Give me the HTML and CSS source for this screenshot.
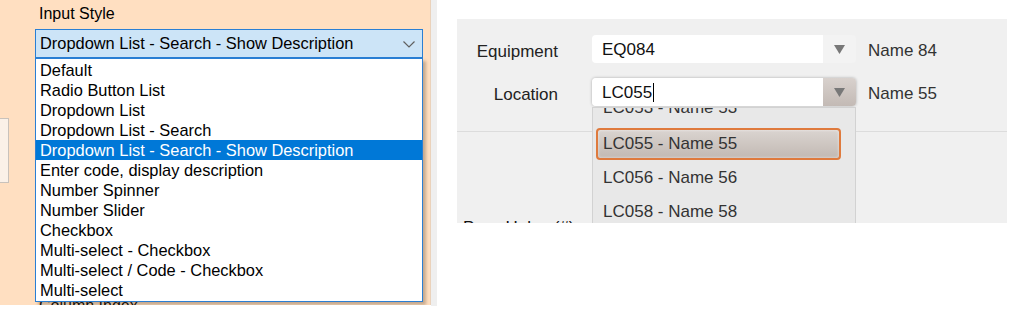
FILE: index.html
```html
<!DOCTYPE html>
<html lang="en">
<head>
<meta charset="UTF-8">
<meta name="viewport" content="width=device-width, initial-scale=1.0">
<title>Input Style</title>
<link rel="stylesheet" href="styles.css">
</head>
<body>
<div class="screen">

  <div class="props">
    <div class="props-edge"><div class="edge-box"></div></div>
    <div class="props-main">
      <div class="field-label">Input Style</div>
      <div class="combo">
        <div class="combo-box">
          <span>Dropdown List - Search - Show Description</span>
          <svg class="chevron" width="12" height="7" viewBox="0 0 12 7"><path d="M0.5 0.5 L6 6 L11.5 0.5" fill="none" stroke="#606060" stroke-width="1.2"/></svg>
        </div>
        <ul class="combo-list">
          <li>Default</li>
          <li>Radio Button List</li>
          <li>Dropdown List</li>
          <li>Dropdown List - Search</li>
          <li class="selected">Dropdown List - Search - Show Description</li>
          <li>Enter code, display description</li>
          <li>Number Spinner</li>
          <li>Number Slider</li>
          <li>Checkbox</li>
          <li>Multi-select - Checkbox</li>
          <li>Multi-select / Code - Checkbox</li>
          <li>Multi-select</li>
        </ul>
      </div>
      <div class="field-label next-field">Column Index</div>
    </div>
  </div>
  <div class="props-stripe"></div>

  <div class="preview">
    <div class="form-card">
      <div class="form-top">
        <div class="form-row">
          <label>Equipment</label>
          <div class="lookup">
            <div class="lookup-input">EQ084</div>
            <div class="lookup-btn">
              <svg width="11" height="9" viewBox="0 0 11 9"><path d="M0 0 H11 L5.5 9 Z" fill="#787878"/></svg>
            </div>
          </div>
          <span class="lookup-name">Name 84</span>
        </div>
        <div class="form-row">
          <label>Location</label>
          <div class="lookup active">
            <div class="lookup-input">LC055<span class="caret"></span></div>
            <div class="lookup-btn">
              <svg width="11" height="9" viewBox="0 0 11 9"><path d="M0 0 H11 L5.5 9 Z" fill="#787878"/></svg>
            </div>
            <div class="lookup-list">
              <ul>
                <li>LC053 - Name 53</li>
                <li class="current">LC055 - Name 55</li>
                <li>LC056 - Name 56</li>
                <li>LC058 - Name 58</li>
                <li>LC059 - Name 59</li>
              </ul>
            </div>
          </div>
          <span class="lookup-name">Name 55</span>
        </div>
      </div>
      <div class="form-bottom">Pass Holes (#)</div>
    </div>
  </div>

</div>
</body>
</html>
```

FILE: styles.css
```css
body {
  margin: 0;
  background-color: #fff;
  font-family: "Liberation Sans", Arial, sans-serif;
  color: #000;
}

.screen {
  display: flex;
  align-items: flex-start;
}

/* left: properties panel */
.props {
  display: flex;
  width: 430px;
  height: 305px;
  background-color: #ffdfc1;
  border-right: 1px solid #ead2bb;
  overflow: hidden;
}

.props-stripe {
  width: 6px;
  height: 306px;
  background-color: #efefef;
}

.props-edge {
  width: 9px;
}

.edge-box {
  margin-top: 118px;
  height: 63px;
  width: 8px;
  background-color: #fbf1e8;
  border: 1px solid #c9c2bb;
  border-left: none;
}

.props-main {
  padding-left: 26px;
  width: 388px;
}

.field-label {
  font-size: 16px;
  line-height: 20px;
  padding: 4px 0 0 4px;
  color: #000;
}

.next-field {
  margin-top: 234px;
}

.combo {
  position: relative;
  margin-top: 5px;
}

.combo-box {
  display: flex;
  align-items: center;
  justify-content: space-between;
  height: 27px;
  border: 1px solid #2a7fd4;
  background-color: #cce4f7;
  padding: 0 7px 0 4px;
  font-size: 16.4px;
}

.chevron {
  margin-top: 1px;
}

.combo-list {
  position: absolute;
  top: 29px;
  left: 0;
  width: 386px;
  margin: 0;
  padding: 1px 0;
  list-style: none;
  background-color: #fff;
  border: 1px solid #2a7fd4;
  box-shadow: 3px 3px 3px rgba(90, 70, 50, 0.35);
  z-index: 2;
}

.combo-list li {
  height: 20px;
  line-height: 20px;
  font-size: 16.4px;
  padding-left: 4px;
}

.combo-list li.selected {
  background-color: #0078d7;
  color: #fff;
}

/* right: form preview */
.preview {
  padding: 19px 0 0 20px;
}

.form-card {
  position: relative;
  width: 550px;
  height: 204px;
  background-color: #f0f0f0;
  overflow: hidden;
  font-size: 17px;
  color: #222;
}

.form-top {
  display: flex;
  flex-direction: column;
  gap: 15px;
  padding: 16px 0 25px;
  border-bottom: 1px solid #dcdcdc;
}

.form-row {
  display: grid;
  grid-template-columns: 101px 264px auto;
  column-gap: 34px;
  align-items: center;
  height: 28px;
}

.form-row label {
  text-align: right;
  padding-top: 6px;
}

.form-row .lookup-name {
  margin-left: -22px;
  padding-top: 4px;
  color: #333;
}

.lookup {
  position: relative;
  display: flex;
  height: 28px;
}

.lookup-input {
  flex: 1;
  display: flex;
  align-items: center;
  padding: 1px 0 0 10px;
  background-color: #fff;
  border-radius: 4px 0 0 4px;
  color: #111;
}

.lookup-btn {
  width: 33px;
  display: flex;
  align-items: center;
  justify-content: center;
  background-color: #f3f3f3;
  border-radius: 0 4px 4px 0;
}

.lookup.active {
  box-shadow: 0 0 3px rgba(0, 0, 0, 0.3);
  border-radius: 4px;
}

.lookup.active .lookup-btn {
  background: linear-gradient(#d8d1cd, #c3bab5);
}

.caret {
  display: inline-block;
  width: 1px;
  height: 19px;
  margin-left: 1px;
  background-color: #000;
}

.lookup-list {
  position: absolute;
  top: 29px;
  left: 0;
  width: 262px;
  height: 140px;
  background-color: #e8e8e8;
  border: 1px solid #d2d2d2;
  overflow: hidden;
  z-index: 2;
}

.lookup-list ul {
  list-style: none;
  margin: -16px 0 0;
  padding: 0;
}

.lookup-list li {
  height: 28px;
  line-height: 28px;
  margin: 0 14px 2px 3px;
  padding: 0 5px;
  border: 2px solid transparent;
  border-radius: 4px;
  color: #333;
}

.lookup-list li:first-child {
  margin-bottom: 4px;
}

.lookup-list li.current {
  border-color: #df7a3d;
  background: linear-gradient(#dad4d0, #c2b9b3);
  box-shadow: inset 0 0 3px rgba(255, 255, 255, 0.6);
}

.form-bottom {
  padding: 82px 0 0 6px;
  line-height: 28px;
  color: #111;
}
```
